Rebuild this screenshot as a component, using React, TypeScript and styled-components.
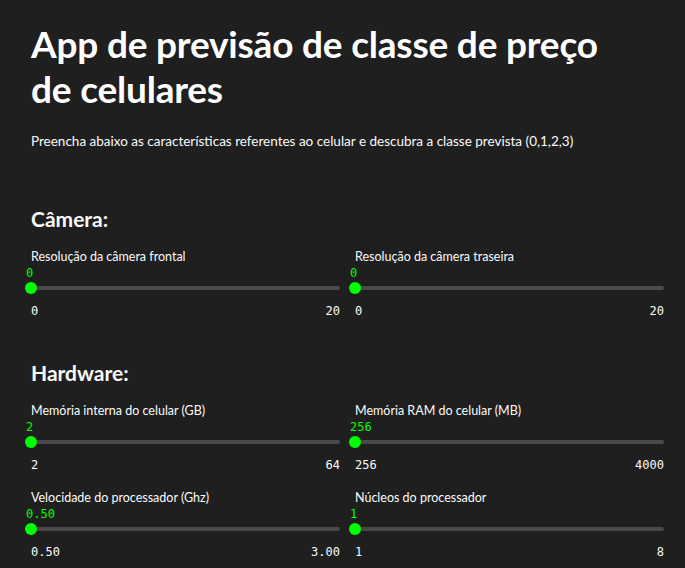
import React from 'react'
import styled, { createGlobalStyle } from 'styled-components'

const Global = createGlobalStyle`
  html, body {
    margin: 0;
    padding: 0;
    background: #1f1f1f;
  }
  body {
    font-family: Lato, "Noto Sans", sans-serif;
    color: #fafafa;
  }
`

type SliderData = { label: string; value: string; min: string; max: string }

const camera: SliderData[] = [
  { label: 'Resolução da câmera frontal', value: '0', min: '0', max: '20' },
  { label: 'Resolução da câmera traseira', value: '0', min: '0', max: '20' },
]

const hardware: SliderData[] = [
  { label: 'Memória interna do celular (GB)', value: '2', min: '2', max: '64' },
  { label: 'Memória RAM do celular (MB)', value: '256', min: '256', max: '4000' },
  { label: 'Velocidade do processador (Ghz)', value: '0.50', min: '0.50', max: '3.00' },
  { label: 'Núcleos do processador', value: '1', min: '1', max: '8' },
]

const Slider = ({ data }: { data: SliderData }) => (
  <SliderBox>
    <Label>{data.label}</Label>
    <Value>{data.value}</Value>
    <Track>
      <Thumb />
    </Track>
    <Ticks>
      <span>{data.min}</span>
      <span>{data.max}</span>
    </Ticks>
  </SliderBox>
)

const App = () => {
  return (
    <Page>
      <Global />
      <Title>App de previsão de classe de preço de celulares</Title>
      <Intro>
        Preencha abaixo as características referentes ao celular e descubra a classe prevista (0,1,2,3)
      </Intro>
      <Section>
        <Heading>Câmera:</Heading>
        <Grid>
          {camera.map((s) => (
            <Slider key={s.label} data={s} />
          ))}
        </Grid>
      </Section>
      <Section>
        <Heading>Hardware:</Heading>
        <Grid>
          {hardware.map((s) => (
            <Slider key={s.label} data={s} />
          ))}
        </Grid>
      </Section>
    </Page>
  )
}

export default App

const Page = styled.div`
  padding: 21px 21px 0 31px;
  width: 633px;
`
const Title = styled.h1`
  margin: 0;
  max-width: 610px;
  font-size: 37px;
  font-weight: 700;
  line-height: 45px;
  letter-spacing: -0.2px;
  color: #ffffff;
`
const Intro = styled.p`
  margin: 20px 0 0;
  font-size: 13.5px;
  line-height: 20px;
  color: #fafafa;
`
const Section = styled.section`
  margin-top: 53px;
  & + & {
    margin-top: 39px;
  }
`
const Heading = styled.h2`
  margin: 0 0 15px;
  font-size: 21px;
  font-weight: 700;
  line-height: 30px;
  color: #fafafa;
`
const Grid = styled.div`
  display: grid;
  grid-template-columns: 309px 309px;
  column-gap: 15px;
  row-gap: 17px;
`
const SliderBox = styled.div`
  display: flex;
  flex-direction: column;
`
const Label = styled.div`
  font-size: 12.5px;
  line-height: 16px;
  color: #fafafa;
`
const Value = styled.div`
  margin-left: -5px;
  font-family: "DejaVu Sans Mono", "Liberation Mono", monospace;
  font-size: 12px;
  line-height: 16px;
  color: #00ff00;
`
const Track = styled.div`
  position: relative;
  margin-top: 5px;
  height: 4px;
  border-radius: 2px;
  background: #4a4a4a;
`
const Thumb = styled.div`
  position: absolute;
  left: -6px;
  top: -4px;
  width: 12px;
  height: 12px;
  border-radius: 50%;
  background: #00ff00;
`
const Ticks = styled.div`
  display: flex;
  justify-content: space-between;
  margin-top: 13px;
  font-family: "DejaVu Sans Mono", "Liberation Mono", monospace;
  font-size: 12px;
  line-height: 16px;
  color: #fafafa;
`
